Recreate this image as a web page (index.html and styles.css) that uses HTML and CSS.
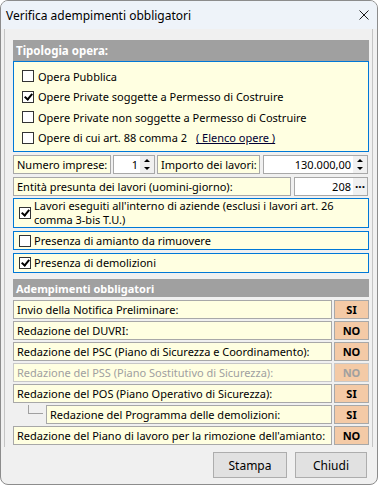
FILE: index.html
```html
<!doctype html>
<html>

<head>
    <meta charset="utf-8">
    <link rel="stylesheet" href="styles.css">
</head>

<body>
    <div class="window">
        <div class="titlebar">
            <span class="title">Verifica adempimenti obbligatori</span>
            <svg class="close" width="10" height="10" viewBox="0 0 10 10">
                <path d="M0.5 0.5 L9.5 9.5 M9.5 0.5 L0.5 9.5" stroke="#1a1a1a" stroke-width="1" fill="none" />
            </svg>
        </div>

        <div class="panel">
            <div class="section-head first">Tipologia opera:</div>
            <div class="choice-box">
                <div class="check-row"><span class="check"></span>Opera Pubblica</div>
                <div class="check-row"><span class="check on"></span>Opere Private soggette a Permesso di Costruire</div>
                <div class="check-row"><span class="check"></span>Opere Private non soggette a Permesso di Costruire</div>
                <div class="check-row"><span class="check"></span>Opere di cui art. 88 comma 2 <a class="link">( Elenco opere )</a></div>
            </div>

            <div class="field-row">
                <div class="cell label w-imprese">Numero imprese:</div>
                <div class="cell input w-count">
                    <span class="value">1</span>
                    <span class="spin"><i class="up"></i><i class="down"></i></span>
                </div>
                <div class="cell label w-importo">Importo dei lavori:</div>
                <div class="cell input w-amount">
                    <span class="value">130.000,00</span>
                    <span class="spin"><i class="up"></i><i class="down"></i></span>
                </div>
            </div>

            <div class="field-row">
                <div class="cell label w-entita">Entità presunta dei lavori (uomini-giorno):</div>
                <div class="cell input w-days">
                    <span class="value">208</span>
                    <span class="dots">···</span>
                </div>
            </div>

            <div class="flag-box tall"><span class="check on"></span><span>Lavori eseguiti all'interno di aziende (esclusi i lavori art. 26<br>comma 3-bis T.U.)</span></div>
            <div class="flag-box"><span class="check"></span><span>Presenza di amianto da rimuovere</span></div>
            <div class="flag-box last"><span class="check on"></span><span>Presenza di demolizioni</span></div>

            <div class="section-head second">Adempimenti obbligatori</div>
            <div class="duty-list">
                <div class="duty"><div class="cell label duty-name">Invio della Notifica Preliminare:</div><div class="answer">SI</div></div>
                <div class="duty"><div class="cell label duty-name">Redazione del DUVRI:</div><div class="answer">NO</div></div>
                <div class="duty"><div class="cell label duty-name">Redazione del PSC (Piano di Sicurezza e Coordinamento):</div><div class="answer">NO</div></div>
                <div class="duty disabled"><div class="cell label duty-name">Redazione del PSS (Piano Sostitutivo di Sicurezza):</div><div class="answer">NO</div></div>
                <div class="duty"><div class="cell label duty-name">Redazione del POS (Piano Operativo di Sicurezza):</div><div class="answer">SI</div></div>
                <div class="duty sub"><span class="branch"></span><div class="cell label duty-name">Redazione del Programma delle demolizioni:</div><div class="answer">SI</div></div>
                <div class="duty"><div class="cell label duty-name">Redazione del Piano di lavoro per la rimozione dell'amianto:</div><div class="answer">NO</div></div>
            </div>
        </div>

        <div class="buttons">
            <button class="btn stampa">Stampa</button>
            <button class="btn chiudi">Chiudi</button>
        </div>
    </div>
</body>

</html>
```

FILE: styles.css
```css
html,
body {
    margin: 0;
    background: #ffffff;
}

body {
    font-family: "Noto Sans", "Open Sans", sans-serif;
    font-size: 11px;
    color: #000;
}

.window {
    width: 378px;
    height: 485px;
    box-sizing: border-box;
    border: 1px solid #8c8c8c;
    border-radius: 8px;
    background: #f0f0f0;
    overflow: hidden;
}

.titlebar {
    height: 28px;
    background: #eef3f9;
    display: flex;
    align-items: center;
    justify-content: space-between;
    padding: 0 8px 0 5px;
}

.title {
    font-size: 12px;
}

.panel {
    margin: 0 4px 0 3px;
    border-left: 1px solid #c4c4c4;
    border-right: 1px solid #c4c4c4;
    padding: 11px 3px 2px 8px;
    display: flex;
    flex-direction: column;
}

.section-head {
    background: #a0a0a0;
    color: #fff;
    font-weight: bold;
    font-size: 11px;
    padding-left: 3px;
    display: flex;
    align-items: center;
}

.section-head.first {
    height: 21px;
    font-size: 11.5px;
}

.section-head.second {
    height: 18px;
    margin-top: 6px;
    margin-bottom: 3px;
}

.choice-box {
    height: 91px;
    box-sizing: border-box;
    border: 1px solid #0078d7;
    background: #ffffe1;
    padding: 4px 0 2px 8px;
}

.check-row {
    height: 20.5px;
    display: flex;
    align-items: center;
}

.check {
    width: 12px;
    height: 12px;
    box-sizing: border-box;
    border: 1px solid #333;
    background: #fff;
    margin-right: 4px;
    flex: none;
    position: relative;
}

.check.on::after {
    content: "";
    position: absolute;
    left: 3px;
    top: 0px;
    width: 3px;
    height: 6px;
    border: solid #000;
    border-width: 0 2px 2px 0;
    transform: rotate(40deg);
}

.link {
    margin-left: 9px;
    text-decoration: underline;
    color: #000033;
}

.field-row {
    display: flex;
    margin-top: 3px;
    height: 19px;
}

.cell {
    box-sizing: border-box;
    border: 1px solid #a8a8a8;
    display: flex;
    align-items: center;
    white-space: nowrap;
    overflow: hidden;
}

.cell.label {
    background: #ffffe1;
    padding-left: 3px;
}

.cell.input {
    background: #fff;
    justify-content: flex-end;
}

.w-imprese {
    width: 98px;
}

.w-count {
    width: 42px;
    margin-left: 2px;
}

.w-importo {
    width: 103px;
    margin-left: 2px;
}

.w-amount {
    width: 105px;
    margin-left: 3px;
}

.w-entita {
    width: 278px;
}

.w-days {
    width: 74px;
    margin-left: 3px;
}

.value {
    padding-right: 2px;
}

.spin,
.dots {
    width: 14px;
    height: 100%;
    background: #f0f0f0;
    display: flex;
    flex-direction: column;
    align-items: center;
    justify-content: space-around;
}

.spin i {
    width: 0;
    height: 0;
    border-left: 3px solid transparent;
    border-right: 3px solid transparent;
}

.spin .up {
    border-bottom: 3px solid #000;
}

.spin .down {
    border-top: 3px solid #000;
}

.dots {
    font-weight: bold;
    font-size: 12px;
    line-height: 14px;
}

.flag-box {
    margin-top: 3px;
    height: 19px;
    box-sizing: border-box;
    border: 1px solid #0078d7;
    background: #ffffe1;
    display: flex;
    align-items: center;
    padding-left: 5px;
    line-height: 14px;
}

.flag-box .check {
    margin-right: 3px;
}

.flag-box.tall {
    margin-top: 2px;
    height: 30px;
}

.flag-box.last {
    height: 20px;
}

.duty-list {
    display: flex;
    flex-direction: column;
    gap: 2px;
}

.duty {
    display: flex;
    height: 19px;
}

.duty-name {
    flex: 1;
}

.answer {
    width: 35px;
    margin-left: 2px;
    box-sizing: border-box;
    border: 1px solid #a8a8a8;
    background: #f4caa6;
    font-weight: bold;
    display: flex;
    align-items: center;
    justify-content: center;
}

.duty.disabled .cell,
.duty.disabled .answer {
    border-color: #c8c8c8;
    color: #a0a0a0;
}

.branch {
    width: 33px;
    flex: none;
    position: relative;
}

.branch::before {
    content: "";
    position: absolute;
    left: 15px;
    top: 0;
    width: 14px;
    height: 8px;
    border-left: 1px solid #a0a0a0;
    border-bottom: 1px solid #a0a0a0;
}

.buttons {
    display: flex;
    justify-content: flex-end;
    gap: 8px;
    padding: 5px 10px 0 0;
}

.btn {
    height: 26px;
    font-family: inherit;
    font-size: 12px;
    background: #e1e1e1;
    border: 1px solid #adadad;
    border-radius: 0;
    color: #000;
}

.stampa {
    width: 74px;
}

.chiudi {
    width: 72px;
}
```
